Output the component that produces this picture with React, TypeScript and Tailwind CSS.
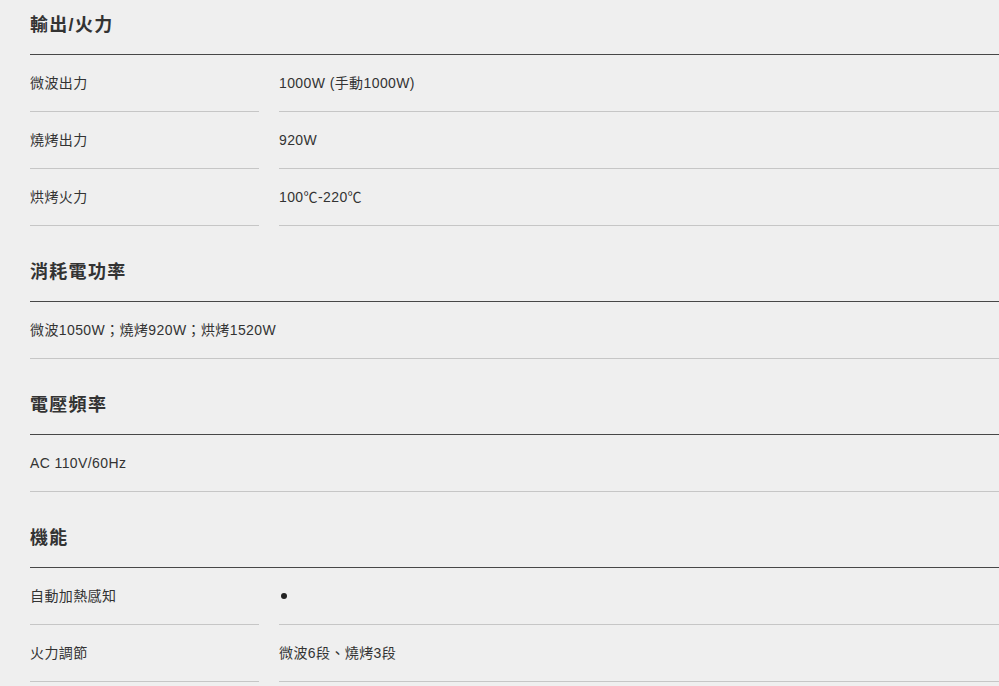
type Row = { label?: string; value: string };
type Section = { title: string; rows: Row[] };

const sections: Section[] = [
  {
    title: "輸出/火力",
    rows: [
      { label: "微波出力", value: "1000W (手動1000W)" },
      { label: "燒烤出力", value: "920W" },
      { label: "烘烤火力", value: "100℃-220℃" },
    ],
  },
  {
    title: "消耗電功率",
    rows: [{ value: "微波1050W；燒烤920W；烘烤1520W" }],
  },
  {
    title: "電壓頻率",
    rows: [{ value: "AC 110V/60Hz" }],
  },
  {
    title: "機能",
    rows: [
      { label: "自動加熱感知", value: "•" },
      { label: "火力調節", value: "微波6段、燒烤3段" },
    ],
  },
];

function SpecRow({ row }: { row: Row }) {
  if (!row.label) {
    return (
      <div className="h-[57px] flex items-center border-b border-[#c6c6c6] text-[14px] tracking-[0.4px] text-[#333]">
        {row.value}
      </div>
    );
  }
  return (
    <div className="flex gap-5 text-[14px] tracking-[0.4px] text-[#333]">
      <div className="w-[229px] h-[57px] flex items-center border-b border-[#c6c6c6]">{row.label}</div>
      <div className="flex-1 h-[57px] flex items-center border-b border-[#c6c6c6]">
        {row.value === "•" ? <span className="ml-[2px] w-[6px] h-[6px] rounded-full bg-[#222]" /> : row.value}
      </div>
    </div>
  );
}

export default function App() {
  return (
    <div
      className="min-h-screen bg-[#efefef] overflow-hidden"
      style={{ fontFamily: '"Liberation Sans", Arial, "Noto Sans CJK TC", sans-serif' }}
    >
      <div className="pl-[30px] -mt-[21px]">
        {sections.map(section => (
          <div key={section.title}>
            <h2 className="pt-[33px] pb-[16px] leading-[26px] text-[18px] font-bold tracking-[1.3px] text-[#333] border-b border-[#474747]">
              {section.title}
            </h2>
            {section.rows.map((row, i) => (
              <SpecRow key={i} row={row} />
            ))}
          </div>
        ))}
      </div>
    </div>
  );
}
